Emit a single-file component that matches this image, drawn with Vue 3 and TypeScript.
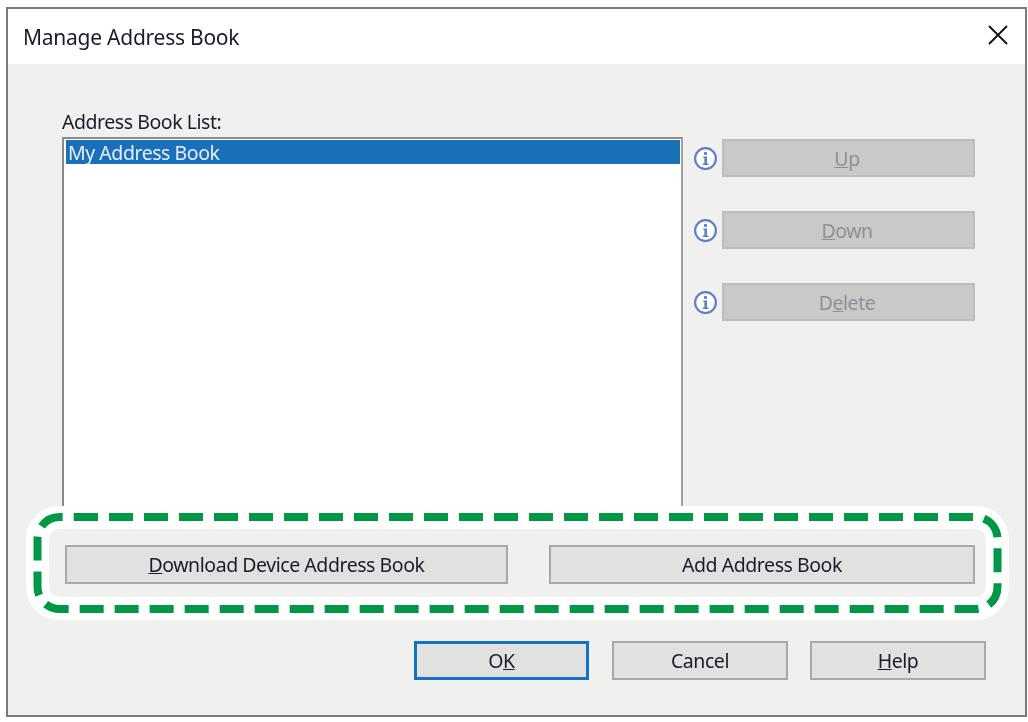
<script setup lang="ts">
interface SideAction { label: string; before: string; key: string; after: string }
const sideActions: SideAction[] = [
  { label: 'Up', before: '', key: 'U', after: 'p' },
  { label: 'Down', before: '', key: 'D', after: 'own' },
  { label: 'Delete', before: 'D', key: 'e', after: 'lete' },
]
</script>

<template>
  <div class="page">
    <div class="window">
      <header class="title-bar">
        <span class="title">Manage Address Book</span>
        <svg class="close" viewBox="0 0 20 20" width="20" height="20" aria-label="Close">
          <path d="M1 1 L19 19 M19 1 L1 19" stroke="#111" stroke-width="1.9" fill="none" />
        </svg>
      </header>

      <main class="body">
        <div class="label">Address Book List:</div>
        <div class="list-row">
          <div class="list">
            <div class="list-item">My Address Book</div>
          </div>
          <div class="side">
            <div v-for="a in sideActions" :key="a.label" class="side-row">
              <svg class="info" viewBox="0 0 24 24" width="24" height="24">
                <circle cx="11.5" cy="12.6" r="10.4" fill="#fff" stroke="#5f7fc6" stroke-width="2.2" />
                <circle cx="11.5" cy="7.4" r="1.7" fill="#5a7cc4" />
                <path d="M9.4 10.6 H13 V17.6 H14.4 V19 H8.8 V17.6 H10.4 V12 H9.4 Z" fill="#5a7cc4" />
              </svg>
              <button class="btn disabled" type="button">{{ a.before }}<u>{{ a.key }}</u>{{ a.after }}</button>
            </div>
          </div>
        </div>

        <div class="actions">
          <button class="btn download" type="button"><u>D</u>ownload Device Address Book</button>
          <button class="btn add" type="button">Add Address Book</button>
        </div>

        <div class="footer">
          <button class="btn ok" type="button">O<u>K</u></button>
          <button class="btn cancel" type="button">Cancel</button>
          <button class="btn help" type="button"><u>H</u>elp</button>
        </div>
      </main>
    </div>

    <svg class="callout" width="1028" height="722" viewBox="0 0 1028 722" aria-hidden="true">
      <rect x="37.5" y="517.5" width="960" height="91" rx="22" fill="none" stroke="#fff" stroke-width="23" />
      <path
        d="M74 517 H975.5 A22 22 0 0 1 997.5 539 V587 A22 22 0 0 1 975.5 609 H59.5 A22 22 0 0 1 37.5 587 V539 A22 22 0 0 1 59.5 517 H74"
        fill="none"
        stroke="#009844"
        stroke-width="8"
        stroke-dasharray="24 11"
      />
    </svg>
  </div>
</template>

<style>
html,
body {
  margin: 0;
  background: #fff;
}
</style>

<style scoped>
.page {
  position: relative;
  width: 1028px;
  height: 722px;
  padding: 7px 0 0 6px;
  box-sizing: border-box;
  overflow: hidden;
  font-family: "Noto Sans", "Open Sans", sans-serif;
  font-size: 19.5px;
  letter-spacing: -0.45px;
  color: #1b1b2b;
}

.window {
  width: 1021px;
  height: 710px;
  box-sizing: border-box;
  border: 2px solid #7a7a7a;
  display: flex;
  flex-direction: column;
  background: #f0f0ef;
  filter: blur(0.3px);
}

.title-bar {
  height: 55px;
  flex: none;
  background: #fff;
  display: flex;
  align-items: center;
  justify-content: space-between;
  padding: 0 17px 0 15px;
}

.title {
  font-size: 21px;
  letter-spacing: -0.25px;
}

.close {
  margin-bottom: 4px;
}

.body {
  flex: 1;
  padding: 46px 39px 0 54px;
  display: flex;
  flex-direction: column;
}

.label {
  height: 24px;
  line-height: 24px;
  margin-bottom: 3px;
}

.list-row {
  display: flex;
  align-items: flex-start;
}

.list {
  width: 621px;
  height: 383px;
  box-sizing: border-box;
  border: 2px solid #a0a0a0;
  border-top-color: #8c8c8c;
  border-left-color: #8c8c8c;
  background: #fff;
  padding: 1px 1px 0 2px;
}

.list-item {
  height: 24px;
  line-height: 26px;
  padding-left: 2px;
  background: #1a6fb9;
  color: #e6f0fa;
}

.side {
  margin: 2px 0 0 11px;
  display: flex;
  flex-direction: column;
  gap: 34px;
}

.side-row {
  display: flex;
  align-items: center;
  gap: 4px;
}

.info {
  flex: none;
}

.btn {
  font: inherit;
  letter-spacing: inherit;
  color: inherit;
  height: 39px;
  box-sizing: border-box;
  padding: 0;
  border: 2px solid #a9a9a9;
  background: #e1e1e0;
  border-radius: 0;
}

.disabled {
  width: 253px;
  height: 38px;
  padding-right: 3px;
  background: #c9c9c9;
  border-color: #bebebe;
  color: #8f8f96;
}

.actions {
  display: flex;
  gap: 41px;
  margin: 25px 0 0 3px;
}

.download {
  width: 443px;
}

.add {
  width: 426px;
}

.footer {
  display: flex;
  justify-content: flex-end;
  gap: 22px;
  margin-top: 57px;
}

.ok {
  width: 175px;
  margin-right: 1px;
  border: 3px solid #1273c4;
}

.cancel,
.help {
  width: 176px;
}

.callout {
  position: absolute;
  left: 0;
  top: 0;
  pointer-events: none;
}
</style>
